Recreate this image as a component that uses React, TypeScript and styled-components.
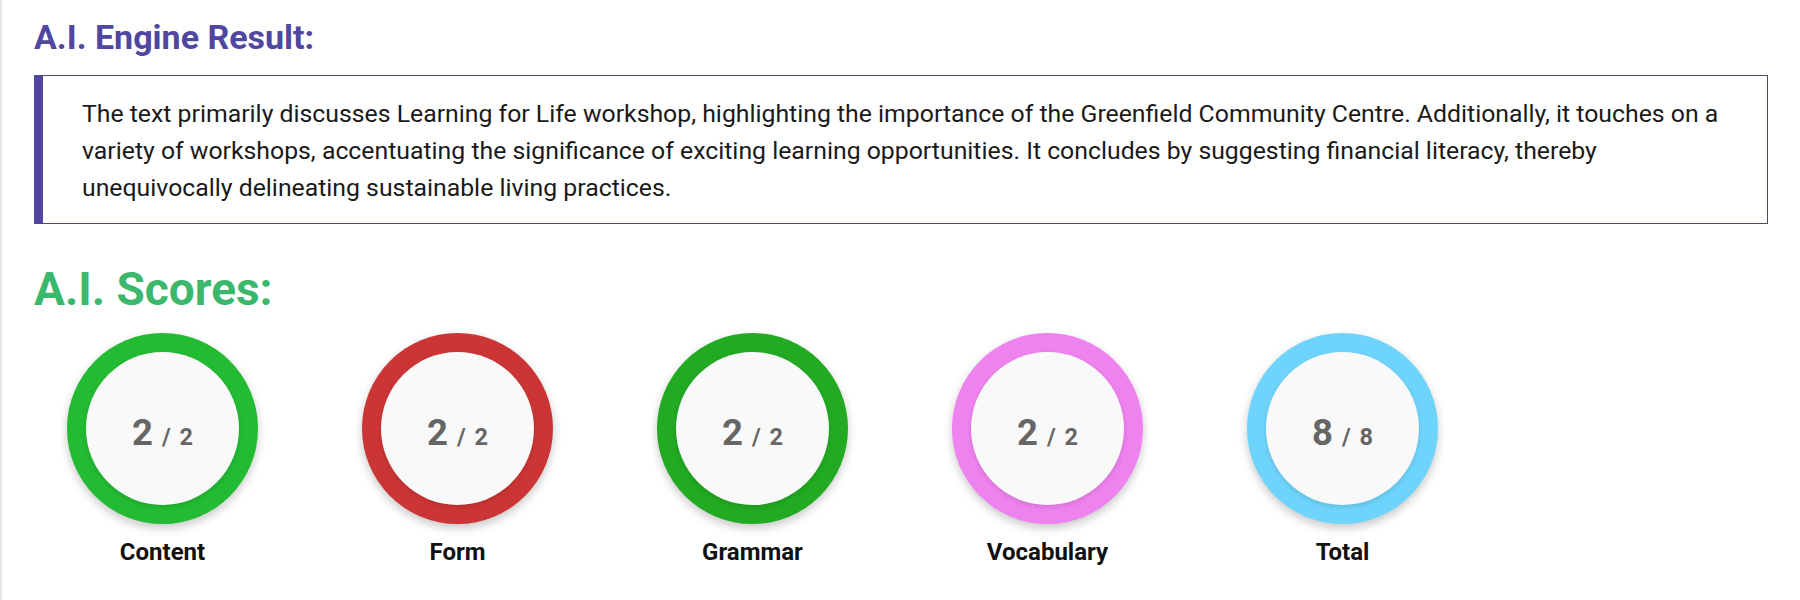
import styled, { createGlobalStyle } from "styled-components";

const GlobalStyle = createGlobalStyle`
  body {
    margin: 0;
    background: #ffffff;
    font-family: Roboto, "Liberation Sans", Arial, sans-serif;
  }
`;

const Page = styled.div`
  width: 1800px;
  height: 600px;
  box-sizing: border-box;
  border-left: 2px solid #e8e8e8;
  padding: 17px 32px 0 32px;
  overflow: hidden;
`;

const SectionTitle = styled.h2<{ $color: string; $size: number; $lh: number }>`
  margin: 0;
  color: ${(p) => p.$color};
  font-size: ${(p) => p.$size}px;
  line-height: ${(p) => p.$lh}px;
  font-weight: 700;
`;

const ResultBox = styled.div`
  margin-top: 18px;
  box-sizing: border-box;
  width: 1734px;
  height: 149px;
  border: 1px solid #4d4878;
  border-left: 9px solid #5048a0;
  padding: 19px 36px 0 39px;
`;

const ResultText = styled.p`
  margin: 0;
  font-size: 24.8px;
  line-height: 37px;
  color: #1a1a1a;
`;

const ScoresTitleWrap = styled.div`
  margin-top: 38px;
`;

const ScoreRow = styled.div`
  display: flex;
  gap: 104px;
  margin-top: 17px;
  padding-left: 33px;
`;

const ScoreItem = styled.div`
  display: flex;
  flex-direction: column;
  align-items: center;
  width: 191px;
`;

const Ring = styled.div<{ $color: string }>`
  box-sizing: border-box;
  width: 191px;
  height: 191px;
  border-radius: 50%;
  background: ${(p) => p.$color};
  display: flex;
  align-items: center;
  justify-content: center;
  box-shadow: 0 4px 10px rgba(0, 0, 0, 0.22);
`;

const Inner = styled.div`
  width: 153px;
  height: 153px;
  border-radius: 50%;
  background: #f9f9f9;
  display: flex;
  align-items: baseline;
  justify-content: center;
  padding-top: 8px;
  box-sizing: border-box;
  align-content: center;
  flex-wrap: wrap;
  box-shadow: 0 2px 5px rgba(0, 0, 0, 0.12);
  color: #666666;
  font-weight: 700;
`;

const Big = styled.span`
  font-size: 36.5px;
  line-height: 40px;
`;

const Small = styled.span`
  font-size: 23.5px;
  margin-left: 9px;
  word-spacing: 3px;
`;

const Label = styled.div`
  margin-top: 14px;
  font-size: 24px;
  line-height: 28px;
  font-weight: 700;
  color: #111111;
`;

type Score = { label: string; value: number; max: number; color: string };

const scores: Score[] = [
  { label: "Content", value: 2, max: 2, color: "#22bb33" },
  { label: "Form", value: 2, max: 2, color: "#cc3535" },
  { label: "Grammar", value: 2, max: 2, color: "#22aa22" },
  { label: "Vocabulary", value: 2, max: 2, color: "#ee82ee" },
  { label: "Total", value: 8, max: 8, color: "#6fd4fb" },
];

export default function App() {
  return (
    <>
      <GlobalStyle />
      <Page>
        <SectionTitle $color="#4f47a0" $size={34} $lh={40}>
          A.I. Engine Result:
        </SectionTitle>
        <ResultBox>
          <ResultText>
            The text primarily discusses Learning for Life workshop, highlighting the importance of the
            Greenfield Community Centre. Additionally, it touches on a variety of workshops, accentuating
            the significance of exciting learning opportunities. It concludes by suggesting financial
            literacy, thereby unequivocally delineating sustainable living practices.
          </ResultText>
        </ResultBox>
        <ScoresTitleWrap>
          <SectionTitle $color="#3cb86c" $size={46} $lh={54}>
            A.I. Scores:
          </SectionTitle>
        </ScoresTitleWrap>
        <ScoreRow>
          {scores.map((s) => (
            <ScoreItem key={s.label}>
              <Ring $color={s.color}>
                <Inner>
                  <Big>{s.value}</Big>
                  <Small>/ {s.max}</Small>
                </Inner>
              </Ring>
              <Label>{s.label}</Label>
            </ScoreItem>
          ))}
        </ScoreRow>
      </Page>
    </>
  );
}
